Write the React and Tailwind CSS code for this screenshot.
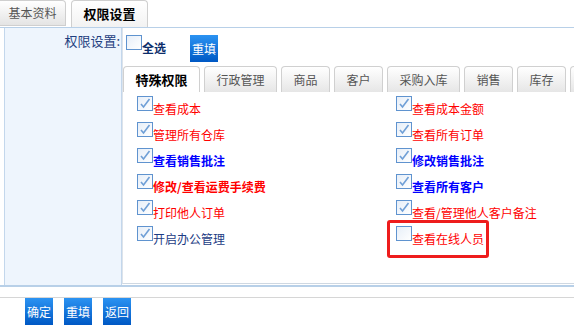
import React from 'react'

const Box = ({ checked }) => (
  <svg width="16" height="15" viewBox="0 0 16 15" className="shrink-0">
    <defs>
      <linearGradient id="cbg" x1="0" y1="0" x2="1" y2="1">
        <stop offset="0" stopColor="#e6eef8" />
        <stop offset="1" stopColor="#ffffff" />
      </linearGradient>
    </defs>
    <rect x="0.5" y="0.5" width="15" height="14" fill="url(#cbg)" stroke="#5f93cf" />
    {checked && (
      <path d="M4 8 L6.5 11 L12.5 3" fill="none" stroke="#6f9fd6" strokeWidth="1.6" />
    )}
  </svg>
)

const left = [
  { t: '查看成本', c: 'text-[#ff0000]' },
  { t: '管理所有仓库', c: 'text-[#ff0000]' },
  { t: '查看销售批注', c: 'text-[#0000ff] font-bold' },
  { t: '修改/查看运费手续费', c: 'text-[#ff0000] font-bold' },
  { t: '打印他人订单', c: 'text-[#ff0000]' },
  { t: '开启办公管理', c: 'text-[#1c3c84]' },
]

const right = [
  { t: '查看成本金额', c: 'text-[#ff0000]', on: true },
  { t: '查看所有订单', c: 'text-[#ff0000]', on: true },
  { t: '修改销售批注', c: 'text-[#0000ff] font-bold', on: true },
  { t: '查看所有客户', c: 'text-[#0000ff] font-bold', on: true },
  { t: '查看/管理他人客户备注', c: 'text-[#ff0000]', on: true },
  { t: '查看在线人员', c: 'text-[#ff0000]', on: false, mark: true },
]

// last tab is cut off by the window, only its edge shows
const tabs = [
  { t: '特殊权限', w: 'w-[77px]', active: true },
  { t: '行政管理', w: 'w-[73px]' },
  { t: '商品', w: 'w-[49px]' },
  { t: '客户', w: 'w-[49px]' },
  { t: '采购入库', w: 'w-[73px]' },
  { t: '销售', w: 'w-[49px]' },
  { t: '库存', w: 'w-[49px]' },
  { t: '', w: 'w-[49px]' },
]

const BlueBtn = ({ children }) => (
  <button className="w-[28px] h-[27px] bg-gradient-to-b from-[#2b93f2] to-[#0058c4] text-white text-[12px] leading-none flex items-center justify-center">
    {children}
  </button>
)

const Item = ({ item, on = true }) => (
  <div className="h-[26px] flex items-start">
    <div className="relative flex items-start">
      {item.mark && (
        <div className="absolute left-[-9px] top-[-6px] w-[102px] h-[38px] border-[3px] border-[#ee1c1c] rounded-[3px]" />
      )}
      <Box checked={on} />
      <span className={`mt-[5px] text-[12px] leading-4 whitespace-nowrap ${item.c}`}>{item.t}</span>
    </div>
  </div>
)

export default function App() {
  return (
    <div className="w-[574px] h-[328px] overflow-hidden bg-white font-['Noto_Sans_CJK_SC',sans-serif]">
      {/* Top tabs */}
      <div className="h-[27px] flex items-start gap-[5px]">
        <div className="w-[66px] h-[26px] flex items-center justify-center border border-l-0 border-[#cfcfcf] rounded-tr-[4px] bg-gradient-to-b from-white to-[#e4e4e4] text-[12px] text-[#555]">
          基本资料
        </div>
        <div className="w-[77px] h-[27px] flex items-center justify-center border border-b-0 border-[#cfcfcf] rounded-t-[4px] bg-gradient-to-b from-white to-[#f2f2f2] text-[13px] font-bold text-black">
          权限设置
        </div>
      </div>

      {/* Content */}
      <div className="flex border-t border-b-2 border-t-[#b8d0e8] border-b-[#b8d0e8] h-[260px]">
        <div className="ml-[4px] w-[118px] bg-[#eef5fd] border-l border-r border-[#c3d7ec] pt-[3px] pr-[1px] text-right text-[13px] text-[#1f3f7f]">
          权限设置:
        </div>
        <div className="flex-1 border-l border-[#dde3ea] border-b border-b-[#cfd8e2] mb-[1px] min-w-0">
          <div className="h-[38px] pt-[7px] pl-[3px] flex items-start">
            <Box checked={false} />
            <span className="mt-[5px] text-[12px] leading-4 font-bold text-[#0c2d6b]">全选</span>
            <div className="ml-[24px]">
              <BlueBtn>重填</BlueBtn>
            </div>
          </div>
          <div className="h-[26px] flex gap-[4px]">
            {tabs.map((tb, i) => (
              <div
                key={i}
                className={`${tb.w} shrink-0 h-[26px] flex items-center justify-center border border-b-0 border-[#d0d0d0] rounded-t-[4px] ${
                  tb.active
                    ? 'bg-white text-black font-bold text-[13px]'
                    : 'bg-gradient-to-b from-white to-[#e6e6e6] text-[#555] text-[12px]'
                }`}
              >
                {tb.t}
              </div>
            ))}
          </div>
          <div className="pt-[4px] pl-[14px] grid grid-cols-[259px_1fr]">
            <div>
              {left.map((it) => (
                <Item key={it.t} item={it} />
              ))}
            </div>
            <div>
              {right.map((it) => (
                <Item key={it.t} item={it} on={it.on} />
              ))}
            </div>
          </div>
        </div>
      </div>

      {/* Bottom buttons */}
      <div className="mt-[10px] border-t border-[#d6d6d6] flex gap-[11px] pl-[25px]">
        <BlueBtn>确定</BlueBtn>
        <BlueBtn>重填</BlueBtn>
        <BlueBtn>返回</BlueBtn>
      </div>
    </div>
  )
}
